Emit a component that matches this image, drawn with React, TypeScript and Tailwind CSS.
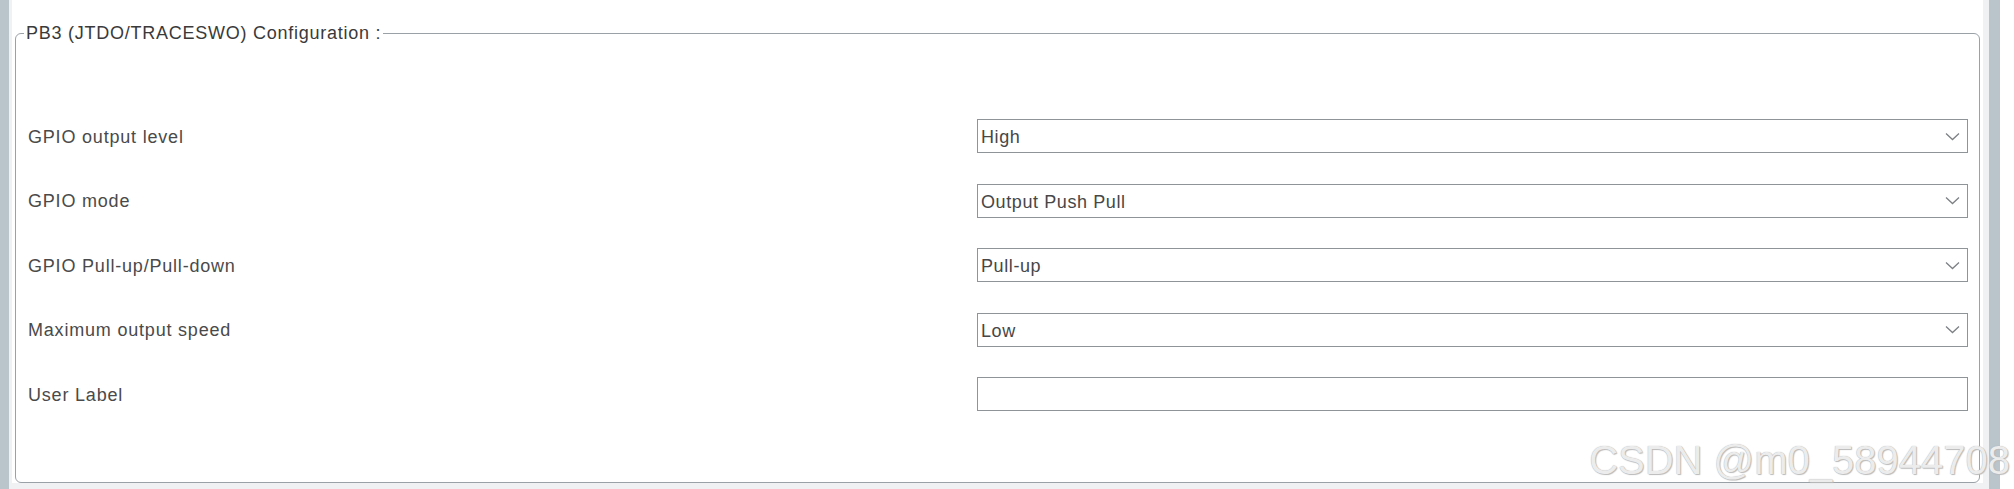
import React from 'react'

type Row = {
    label: string
    value?: string
    dropdown: boolean
}

const rows: Row[] = [
    { label: 'GPIO output level', value: 'High', dropdown: true },
    { label: 'GPIO mode', value: 'Output Push Pull', dropdown: true },
    { label: 'GPIO Pull-up/Pull-down', value: 'Pull-up', dropdown: true },
    { label: 'Maximum output speed', value: 'Low', dropdown: true },
    { label: 'User Label', dropdown: false },
]

function Chevron(): JSX.Element {
    return (
        <svg width="15" height="9" viewBox="0 0 15 9" fill="none">
            <polyline points="1,1.5 7.5,7.5 14,1.5" stroke="#7d8084" strokeWidth="1.3" />
        </svg>
    )
}

function Field({ value, dropdown }: { value?: string; dropdown: boolean }): JSX.Element {
    return (
        <div className="flex h-[34px] w-[991px] items-center justify-between border border-[#8f9498] bg-white pl-[3px] pr-[7px] text-[18px] tracking-[0.6px] text-[#474747]">
            <span className="pt-[3px]">{value ?? ''}</span>
            {dropdown && <Chevron />}
        </div>
    )
}

export default function App(): JSX.Element {
    return (
        <div className="relative flex h-[489px] w-[2014px] overflow-hidden bg-white font-['Liberation_Sans',Arial,sans-serif]">
            <div className="w-[9px] bg-[#b9c4cb]" />
            <div className="w-[3px] bg-[#eff1f3]" />
            <div className="flex w-[1971px] flex-col">
                <div className="flex-1 bg-white pt-[22px]">
                    <fieldset className="ml-[3px] mr-[3px] h-[461px] rounded-[6px] border border-[#9aa1a7]">
                        <legend className="ml-[8px] px-[2px] pt-[1px] text-[18px] leading-[21px] tracking-[0.75px] text-[#3a3a3a]">
                            PB3 (JTDO/TRACESWO) Configuration :
                        </legend>
                        <div className="flex flex-col gap-[30.5px] pl-[12px] pr-[11px] pt-[75px]">
                            {rows.map((row) => (
                                <div key={row.label} className="flex items-center">
                                    <div className="w-[949px] pt-[2px] text-[18px] tracking-[0.8px] text-[#4a4a4a]">
                                        {row.label}
                                    </div>
                                    <Field value={row.value} dropdown={row.dropdown} />
                                </div>
                            ))}
                        </div>
                    </fieldset>
                </div>
                <div className="h-[6px] bg-[#eff1f3]" />
            </div>
            <div className="w-[6px] bg-[#eff1f3]" />
            <div className="w-[11px] bg-[#b9c4cb]" />
            <div className="w-[14px] bg-white" />
            <div className="pointer-events-none absolute right-[4px] top-[440px] text-[40px] leading-[40px] text-[#ececec] [text-shadow:0_0_1px_#a6a6a6,1px_1px_1px_#bdbdbd]">
                CSDN @m0_58944708
            </div>
        </div>
    )
}
